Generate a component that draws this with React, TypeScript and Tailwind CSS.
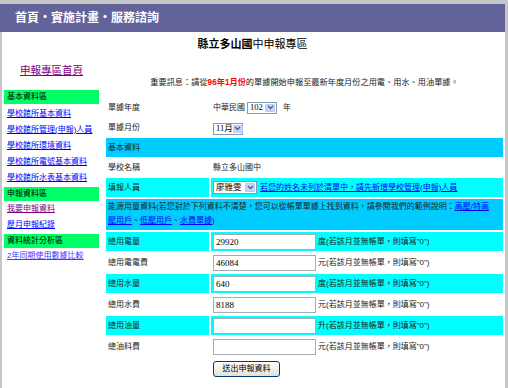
import type { ReactNode } from 'react';

const SANS = "font-['Liberation_Sans','Noto_Sans_CJK_TC',sans-serif]";
const SERIF = "font-['Liberation_Serif','Noto_Sans_CJK_TC',serif]";

function Select({ label, className }: { label: string; className: string }) {
  return (
    <span className={`inline-flex border border-[#7f9db9] bg-white ${className}`}>
      <span className={`flex-1 flex items-center pl-[2px] text-[8.5px] leading-none text-black whitespace-nowrap ${SERIF}`}>
        {label}
      </span>
      <span className="w-[10px] shrink-0 my-[1px] mr-[1px] rounded-[1px] bg-[#c3d3fd] border border-[#b7c9f5] flex items-center justify-center">
        <svg width="7" height="5" viewBox="0 0 7 5">
          <polyline points="1,1 3.5,3.5 6,1" stroke="#4d6185" strokeWidth="1.4" fill="none" />
        </svg>
      </span>
    </span>
  );
}

function Field({ value, unit }: { value: string; unit: string }) {
  return (
    <>
      <input
        readOnly
        defaultValue={value}
        className={`w-[103px] h-[16px] border border-[#a5acb2] bg-white pl-[2px] text-[9px] text-black outline-none ${SERIF}`}
      />
      <span className="ml-[2px]">{unit}(若該月並無帳單，則填寫"0")</span>
    </>
  );
}

function Row({
  label,
  cyan = false,
  h,
  children,
}: {
  label: string;
  cyan?: boolean;
  h: string;
  children?: ReactNode;
}) {
  const bg = cyan ? 'bg-[#00ffff]' : '';
  return (
    <div className={`flex gap-[2px] ${h}`}>
      <div className={`w-[103px] shrink-0 pl-[2px] flex items-center ${bg}`}>{label}</div>
      <div className={`flex-1 pl-[2px] flex items-center ${bg}`}>{children}</div>
    </div>
  );
}

const sideLink = 'block h-[16px] leading-[16px] pl-[5px] text-[8px] underline whitespace-nowrap';
const greenBar = 'ml-[2px] w-[95px] h-[14px] leading-[14px] pl-[3px] text-[8px] text-black bg-[#00ff66]';

export default function App() {
  return (
    <div className={`w-[508px] h-[388px] overflow-hidden bg-white border-t-[4px] border-r-[3px] border-[#c6c6c6] ${SANS}`}>
      <div className="h-[28px] bg-[#63639b] flex items-center pl-[15px] text-white font-bold text-[12px]">
        首頁・實施計畫・服務諮詢
      </div>
      <div className="h-[356px] border-l-[2px] border-[#c6c6c6]">
        <div className="h-[24px] flex items-center justify-center text-[11px] text-black pr-[2px]">
          <span className="font-bold">縣立多山國</span>
          <span>中申報專區</span>
        </div>
        <div className="flex">
          {/* sidebar */}
          <div className="w-[102px] shrink-0 pt-[7px]">
            <a className="block pl-[18px] text-[10.5px] leading-[14px] text-[#800080] underline">申報專區首頁</a>
            <div className={`${greenBar} mt-[13px]`}>基本資料區</div>
            <div className="mt-[2px] text-[#0000ff]">
              <a className={sideLink}>學校館所基本資料</a>
              <a className={sideLink}>學校館所管理(申報)人員</a>
              <a className={sideLink}>學校館所環境資料</a>
              <a className={sideLink}>學校館所電號基本資料</a>
              <a className={sideLink}>學校館所水表基本資料</a>
            </div>
            <div className={`${greenBar} mt-[1px]`}>申報資料區</div>
            <a className={`${sideLink} text-[#800080]`}>我要申報資料</a>
            <a className={`${sideLink} text-[#0000ff]`}>歷月申報紀錄</a>
            <div className={`${greenBar} mt-[1px]`}>資料統計分析區</div>
            <a className={`${sideLink} text-[#3a3aff]`}>2年同期使用數據比較</a>
          </div>

          {/* main */}
          <div className="w-[401px] shrink-0 pt-[21px] text-[8px] text-[#222]">
            <div className="text-center text-[8.2px] leading-[12px] whitespace-nowrap">
              重要訊息：請從<span className="text-[#ff0000] font-bold">96年1月份</span>
              的單據開始申報至最新年度月份之用電、用水、用油單據。
            </div>
            <div className="mx-[2px] mt-[9px] flex flex-col gap-[2px]">
              <Row label="單據年度" h="h-[19px]">
                <span>中華民國</span>
                <Select label="102" className="ml-[2px] w-[30px] h-[12px]" />
                <span className="ml-[6px]">年</span>
              </Row>
              <Row label="單據月份" h="h-[17px]">
                <Select label="11月" className="w-[30px] h-[12px] mt-[2px]" />
              </Row>
              <div className="h-[19px] bg-[#00ccff] pl-[2px] flex items-center">基本資料</div>
              <Row label="學校名稱" h="h-[17px]">
                縣立多山國中
              </Row>
              <Row label="填報人員" cyan h="h-[19px]">
                <Select label="廖雅雯" className="w-[44px] h-[13px]" />
                <a className="ml-[3px] text-[#0000ff] underline whitespace-nowrap">
                  若您的姓名未列於清單中，請先新增學校管理(申報)人員
                </a>
              </Row>
              <div className="h-[31px] bg-[#00ccff] pl-[2px] pt-[1px] leading-[14px] whitespace-nowrap">
                能源用量資料(若您對於下列資料不清楚，您可以從帳單單據上找到資料，請參閱我們的範例說明：
                <a className="text-[#0000ff] underline">高壓/特高</a>
                <br />
                <a className="text-[#0000ff] underline">壓用戶</a>、
                <a className="text-[#0000ff] underline">低壓用戶</a>、
                <a className="text-[#0000ff] underline">水費單據</a>)
              </div>
              <Row label="總用電量" cyan h="h-[19px]">
                <Field value="29920" unit="度" />
              </Row>
              <Row label="總用電電費" h="h-[19px]">
                <Field value="46084" unit="元" />
              </Row>
              <Row label="總用水量" cyan h="h-[19px]">
                <Field value="640" unit="度" />
              </Row>
              <Row label="總用水費" h="h-[19px]">
                <Field value="8188" unit="元" />
              </Row>
              <Row label="總用油量" cyan h="h-[19px]">
                <Field value="" unit="升" />
              </Row>
              <Row label="總油料費" h="h-[19px]">
                <Field value="" unit="元" />
              </Row>
            </div>
            <button className="ml-[109px] mt-[5px] w-[67px] h-[16px] rounded-[3px] border border-[#003c74] bg-gradient-to-b from-white to-[#e3e1d6] text-[8px] text-black leading-none">
              送出申報資料
            </button>
          </div>
        </div>
      </div>
    </div>
  );
}
